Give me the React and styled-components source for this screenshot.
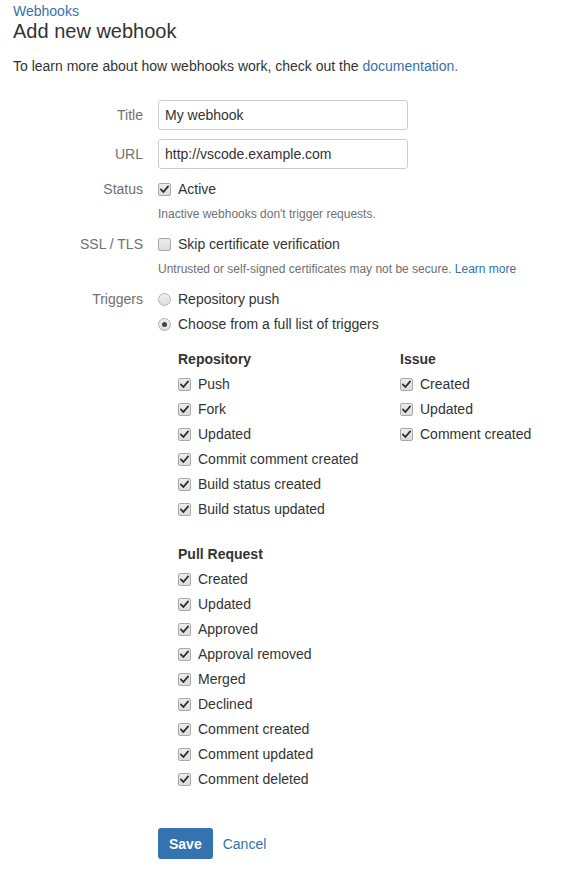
import React from "react";
import styled, { createGlobalStyle } from "styled-components";

const Global = createGlobalStyle`
  html, body { margin: 0; padding: 0; background: #fff; }
  body { font-family: "Liberation Sans", Arial, sans-serif; font-size: 14px; color: #333; line-height: 20px; }
  * { box-sizing: border-box; }
`;

const Page = styled.div`
  padding: 1px 13px 0 13px;
`;

const Link = styled.a`
  color: #3572b0;
  text-decoration: none;
  cursor: pointer;
`;

const Breadcrumb = styled.div`
  line-height: 20px;
`;

const Heading = styled.h1`
  margin: -2px 0 0;
  font-size: 20px;
  font-weight: normal;
  line-height: 24px;
  color: #333;
`;

const Intro = styled.p`
  margin: 13px 0 0;
  line-height: 20px;
`;

const Form = styled.form`
  margin-top: 24px;
  display: grid;
  grid-template-columns: 130px 1fr;
  column-gap: 15px;
  row-gap: 9px;
  align-items: start;
`;

const Label = styled.label`
  text-align: right;
  color: #707070;
  line-height: ${(p) => (p.$input ? "30px" : "20px")};
  padding-top: ${(p) => (p.$input ? 0 : 1)}px;
`;

const Field = styled.div`
  display: flex;
  flex-direction: column;
  padding-top: 1px;
`;

const TextInput = styled.input`
  width: 250px;
  height: 30px;
  border: 1px solid #ccc;
  border-radius: 3px;
  padding: 0 6px;
  font-family: inherit;
  font-size: 14px;
  color: #333;
  outline: none;
`;

const Row = styled.label`
  display: flex;
  align-items: center;
  gap: 7px;
  height: 20px;
  margin-top: ${(p) => p.$mt || 0}px;
  color: #333;
`;

const BoxWrap = styled.span`
  width: 13px;
  height: 13px;
  flex: none;
  border: 1px solid #a9a9a9;
  border-radius: 2px;
  background: linear-gradient(#ededed, #dcdcdc);
  display: flex;
  align-items: center;
  justify-content: center;
`;

const RadioWrap = styled.span`
  width: 13px;
  height: 13px;
  flex: none;
  border: 1px solid #b4b4b4;
  border-radius: 50%;
  background: linear-gradient(#f0f0f0, #dedede);
  display: flex;
  align-items: center;
  justify-content: center;
`;

const Dot = styled.span`
  width: 5px;
  height: 5px;
  border-radius: 50%;
  background: #444;
`;

const Help = styled.div`
  font-size: 12px;
  color: #707070;
  line-height: 20px;
  margin-top: 5px;
`;

const Checkbox = ({ checked }) => (
  <BoxWrap>
    {checked && (
      <svg width="9" height="9" viewBox="0 0 9 9">
        <path d="M1 4.6 L3.4 7 L8 1.6" fill="none" stroke="#2b2b2b" strokeWidth="1.8" strokeLinecap="square" />
      </svg>
    )}
  </BoxWrap>
);

const Radio = ({ checked }) => <RadioWrap>{checked && <Dot />}</RadioWrap>;

const TriggerGrid = styled.div`
  margin: 15px 0 0 20px;
  display: grid;
  grid-template-columns: 222px auto;
  row-gap: 25px;
`;

const Group = styled.div`
  display: flex;
  flex-direction: column;
  gap: 5px;
`;

const GroupTitle = styled.div`
  font-weight: bold;
  line-height: 20px;
  color: #333;
`;

const Actions = styled.div`
  grid-column: 2;
  margin-top: 30px;
  display: flex;
  align-items: center;
  gap: 10px;
`;

const SaveButton = styled.button`
  height: 31px;
  padding: 0 11px;
  background: #3572b0;
  color: #fff;
  border: none;
  border-radius: 3px;
  font-family: inherit;
  font-size: 14px;
  font-weight: bold;
`;

const repo = ["Push", "Fork", "Updated", "Commit comment created", "Build status created", "Build status updated"];
const issue = ["Created", "Updated", "Comment created"];
const pr = ["Created", "Updated", "Approved", "Approval removed", "Merged", "Declined", "Comment created", "Comment updated", "Comment deleted"];

const TriggerGroup = ({ title, items }) => (
  <Group>
    <GroupTitle>{title}</GroupTitle>
    {items.map((it) => (
      <Row key={it}>
        <Checkbox checked />
        {it}
      </Row>
    ))}
  </Group>
);

export default function App() {
  return (
    <Page>
      <Global />
      <Breadcrumb>
        <Link>Webhooks</Link>
      </Breadcrumb>
      <Heading>Add new webhook</Heading>
      <Intro>
        To learn more about how webhooks work, check out the <Link>documentation.</Link>
      </Intro>
      <Form onSubmit={(e) => e.preventDefault()}>
        <Label $input>Title</Label>
        <TextInput defaultValue="My webhook" />
        <Label $input>URL</Label>
        <TextInput defaultValue="http://vscode.example.com" />
        <Label>Status</Label>
        <Field>
          <Row>
            <Checkbox checked />
            Active
          </Row>
          <Help>Inactive webhooks don't trigger requests.</Help>
        </Field>
        <Label>SSL / TLS</Label>
        <Field>
          <Row>
            <Checkbox />
            Skip certificate verification
          </Row>
          <Help>
            Untrusted or self-signed certificates may not be secure. <Link>Learn more</Link>
          </Help>
        </Field>
        <Label>Triggers</Label>
        <Field>
          <Row>
            <Radio />
            Repository push
          </Row>
          <Row $mt={5}>
            <Radio checked />
            Choose from a full list of triggers
          </Row>
          <TriggerGrid>
            <TriggerGroup title="Repository" items={repo} />
            <TriggerGroup title="Issue" items={issue} />
            <TriggerGroup title="Pull Request" items={pr} />
          </TriggerGrid>
        </Field>
        <Actions>
          <SaveButton type="submit">Save</SaveButton>
          <Link>Cancel</Link>
        </Actions>
      </Form>
    </Page>
  );
}
